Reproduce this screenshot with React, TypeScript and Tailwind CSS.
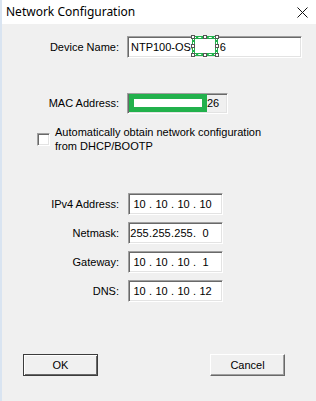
import React from 'react';

const sunken =
  'border border-t-[#a0a0a0] border-l-[#a0a0a0] border-b-white border-r-white shadow-[inset_1px_1px_0_#696969,inset_-1px_-1px_0_#e3e3e3]';

const Label: React.FC<{ text: string }> = ({ text }) => (
  <div className="w-[120px] pr-[1px] text-right leading-[22px]">{text}</div>
);

const IpField: React.FC<{ parts: string[] }> = ({ parts }) => (
  <div className={`ml-[8px] flex h-[22px] w-[95px] items-center bg-white pl-[1px] ${sunken}`}>
    {parts.map((p, i) => (
      <React.Fragment key={i}>
        <span className="w-[19px] text-center">{p}</span>
        {i < 3 && <span className="w-[3px] text-center">.</span>}
      </React.Fragment>
    ))}
  </div>
);

const Handle: React.FC<{ className: string }> = ({ className }) => (
  <div className={`absolute h-[4px] w-[4px] border border-[#555] bg-white ${className}`} />
);

const Button: React.FC<{ text: string; isDefault?: boolean }> = ({ text, isDefault }) => (
  <div
    className={`flex h-[22px] w-[75px] items-center justify-center bg-[#f0f0f0] ${
      isDefault
        ? 'border border-[#3c3c3c] shadow-[inset_1px_1px_0_#fff,inset_-1px_-1px_0_#696969]'
        : 'border border-t-white border-l-white border-b-[#696969] border-r-[#696969] shadow-[inset_-1px_-1px_0_#a0a0a0]'
    }`}
  >
    {text}
  </div>
);

export default function App() {
  return (
    <div className="flex h-[401px] w-[316px] bg-[#f0f0f0] text-black">
      <div className="w-[2px] bg-[#d9e4f1]" />
      <div className="flex flex-1 flex-col text-[11px] font-['Liberation_Sans',Arial,sans-serif]">
        <div className="flex h-[24px] items-center justify-between bg-white pl-[4px] pr-[8px]">
          <span className="text-[12px] font-['Noto_Sans','Open_Sans',sans-serif]">Network Configuration</span>
          <svg width="11" height="11" viewBox="0 0 11 11" className="mt-[1px]">
            <path d="M0.5 0.5 L10.5 10.5 M10.5 0.5 L0.5 10.5" stroke="#111" strokeWidth="1" />
          </svg>
        </div>

        <div className="mt-[12px] flex items-center -ml-[2px]">
          <Label text="Device Name:" />
          <div className={`relative ml-[7px] flex h-[22px] w-[175px] items-center bg-white pl-[3px] ${sunken}`}>
            <span>NTP100-OSC</span>
            <span className="ml-[21px]">6</span>
            <div className="absolute left-[63px] top-[-2px] h-[22px] w-[28px]">
              <div className="absolute inset-[1px] border-[3px] border-[#22b14c] bg-white" />
              <div className="absolute inset-[2px] border border-dashed border-white" />
              <Handle className="left-0 top-0" />
              <Handle className="left-[12px] top-0" />
              <Handle className="right-0 top-0" />
              <Handle className="left-0 top-[9px]" />
              <Handle className="right-0 top-[9px]" />
              <Handle className="bottom-0 left-0" />
              <Handle className="bottom-0 left-[12px]" />
              <Handle className="bottom-0 right-0" />
            </div>
          </div>
        </div>

        <div className="mt-[34px] flex items-center -ml-[2px]">
          <Label text="MAC Address:" />
          <div className={`ml-[7px] flex h-[21px] w-[101px] items-center bg-[#f0f0f0] pl-[1px] ${sunken}`}>
            <div className="h-[18px] w-[78px] border-[5px] border-[#22b14c] bg-white" />
            <span>26</span>
          </div>
        </div>

        <div className="mt-[11px] ml-[35px] flex items-start">
          <div className={`mt-[8px] h-[13px] w-[13px] bg-white ${sunken}`} />
          <div className="ml-[5px] leading-[14px]">
            Automatically obtain network configuration
            <br />
            from DHCP/BOOTP
          </div>
        </div>

        <div className="mt-[40px] flex flex-col gap-[7px] -ml-[2px]">
          <div className="flex items-center">
            <Label text="IPv4 Address:" />
            <IpField parts={['10', '10', '10', '10']} />
          </div>
          <div className="flex items-center">
            <Label text="Netmask:" />
            <IpField parts={['255', '255', '255', '0']} />
          </div>
          <div className="flex items-center">
            <Label text="Gateway:" />
            <IpField parts={['10', '10', '10', '1']} />
          </div>
          <div className="flex items-center">
            <Label text="DNS:" />
            <IpField parts={['10', '10', '10', '12']} />
          </div>
        </div>

        <div className="mt-[52px] flex justify-between pl-[21px] pr-[31px]">
          <Button text="OK" isDefault />
          <Button text="Cancel" />
        </div>
      </div>
    </div>
  );
}
